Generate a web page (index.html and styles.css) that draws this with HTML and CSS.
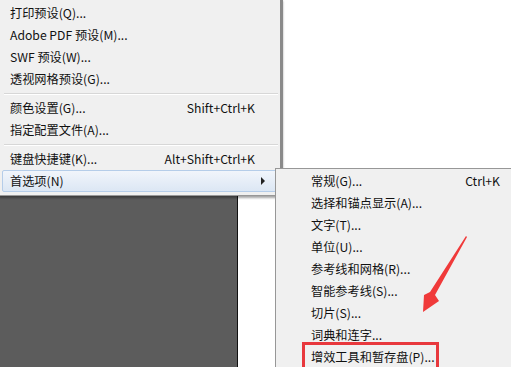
FILE: index.html
```html
<!DOCTYPE html>
<html lang="zh-CN">
<head>
    <meta charset="UTF-8">
    <title>首选项菜单</title>
    <link rel="stylesheet" href="styles.css">
</head>
<body>
    <div class="canvas"></div>

    <div class="menu main-menu">
        <div class="item"><span>打印预设(Q)...</span></div>
        <div class="item"><span>Adobe PDF 预设(M)...</span></div>
        <div class="item"><span>SWF 预设(W)...</span></div>
        <div class="item"><span>透视网格预设(G)...</span></div>
        <div class="sep"></div>
        <div class="item"><span>颜色设置(G)...</span><span class="key">Shift+Ctrl+K</span></div>
        <div class="item"><span>指定配置文件(A)...</span></div>
        <div class="sep"></div>
        <div class="item"><span>键盘快捷键(K)...</span><span class="key">Alt+Shift+Ctrl+K</span></div>
        <div class="item active"><span>首选项(N)</span><span class="more"></span></div>
    </div>

    <div class="menu sub-menu">
        <div class="item"><span>常规(G)...</span><span class="key">Ctrl+K</span></div>
        <div class="item"><span>选择和锚点显示(A)...</span></div>
        <div class="item"><span>文字(T)...</span></div>
        <div class="item"><span>单位(U)...</span></div>
        <div class="item"><span>参考线和网格(R)...</span></div>
        <div class="item"><span>智能参考线(S)...</span></div>
        <div class="item"><span>切片(S)...</span></div>
        <div class="item"><span>词典和连字...</span></div>
        <div class="item"><span>增效工具和暂存盘(P)...</span></div>
    </div>

    <div class="mark-box"></div>
    <svg class="mark-arrow" width="511" height="367" viewBox="0 0 511 367">
        <polygon points="467,237 435,295 439,301 423,312 424,295 430,292 466,236" fill="#f03a3a"/>
    </svg>
</body>
</html>
```

FILE: styles.css
```css
body {
    margin: 0;
    width: 511px;
    height: 367px;
    overflow: hidden;
    background: #fff;
    position: relative;
    font-family: "Noto Sans CJK SC", "Noto Sans", sans-serif;
    font-size: 12.2px;
    color: #111;
}
.canvas {
    position: absolute;
    left: 0;
    top: 196px;
    width: 237px;
    height: 171px;
    background: #5c5c5c;
    border-right: 1px solid #111;
}
.menu {
    position: absolute;
    background: #f0f0f0;
    border: 1px solid #979797;
    box-sizing: border-box;
    overflow: hidden;
}
.main-menu {
    left: -1px;
    top: -1px;
    width: 284px;
    padding: 2px 2px 3px 2px;
    border-right: 3px solid #8a8a8a;
    box-shadow: 0 2px 2px rgba(0, 0, 0, 0.35);
    overflow: visible;
}
.sub-menu {
    left: 275px;
    top: 168px;
    width: 237px;
    height: 199px;
    padding: 1px 2px;
    border-right: none;
    border-bottom: none;
}
.item {
    display: flex;
    align-items: center;
    height: 22px;
    line-height: 22px;
    white-space: nowrap;
    box-sizing: border-box;
    border: 1px solid transparent;
    border-radius: 2px;
}
.main-menu .item {
    padding: 0 22px 0 7px;
}
.sub-menu .item {
    padding: 0 9px 0 32px;
}
.key {
    margin-left: auto;
}
.item.active {
    background: linear-gradient(#f1f5fb, #dce7f4);
    border-color: #b5cde9;
}
.more {
    margin-left: auto;
    margin-right: -10px;
    width: 0;
    height: 0;
    border-top: 4px solid transparent;
    border-bottom: 4px solid transparent;
    border-left: 4px solid #222;
}
.sep {
    height: 7px;
    position: relative;
}
.sep::after {
    content: "";
    position: absolute;
    left: 2px;
    right: 0;
    top: 3px;
    height: 1px;
    background: #d7d7d7;
    border-bottom: 1px solid #fff;
}
.mark-box {
    position: absolute;
    left: 302px;
    top: 342px;
    width: 131px;
    height: 22px;
    border: 3px solid #e8383d;
    border-bottom: none;
}
.mark-arrow {
    position: absolute;
    left: 0;
    top: 0;
}
```
